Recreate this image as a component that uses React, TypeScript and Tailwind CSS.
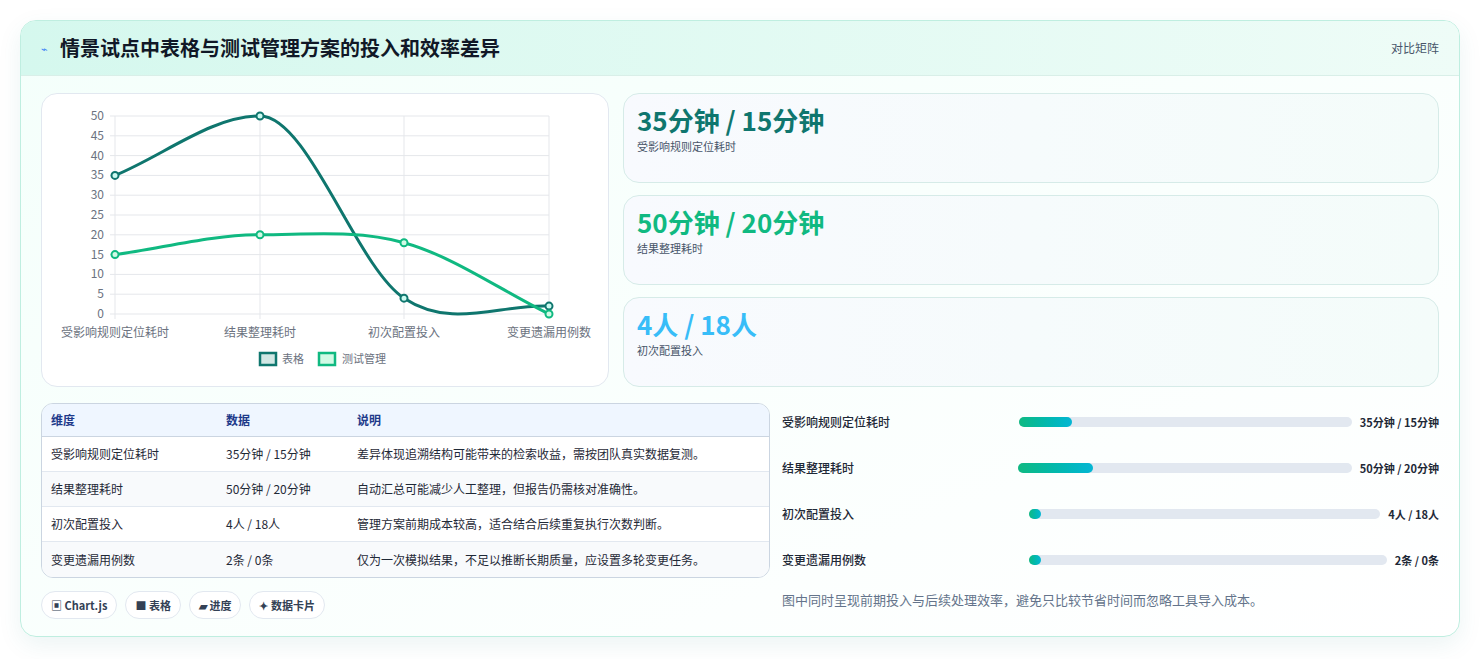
import React from "react";

const F = { fontFamily: '"Noto Sans CJK SC", "Noto Sans", sans-serif' };

function yv(v: number) { return 313 - v * 3.96; }
const xs = [113, 258, 402, 547];
function curve(vals: number[]) {
  const p = vals.map((v, i) => [xs[i], yv(v)]);
  const n = p.length;
  const s: number[] = [];
  for (let i = 0; i < n - 1; i++) s.push((p[i + 1][1] - p[i][1]) / (p[i + 1][0] - p[i][0]));
  const m: number[] = [];
  for (let i = 0; i < n; i++) {
    if (i === 0) m.push(s[0]);
    else if (i === n - 1) m.push(s[n - 2]);
    else if (s[i - 1] * s[i] <= 0) m.push(0);
    else m.push((s[i - 1] + s[i]) / 2);
  }
  let d = `M${p[0][0]},${p[0][1]}`;
  for (let i = 0; i < n - 1; i++) {
    const dx = (p[i + 1][0] - p[i][0]) / 3;
    d += ` C${p[i][0] + dx},${p[i][1] + m[i] * dx} ${p[i + 1][0] - dx},${p[i + 1][1] - m[i + 1] * dx} ${p[i + 1][0]},${p[i + 1][1]}`;
  }
  return d;
}

function Chart() {
  const a = [35, 50, 4, 2], b = [15, 20, 18, 0];
  const labels = ["受影响规则定位耗时", "结果整理耗时", "初次配置投入", "变更遗漏用例数"];
  return (
    <svg width="568" height="294" viewBox="40 93 568 294" style={F}>
      {[0, 5, 10, 15, 20, 25, 30, 35, 40, 45, 50].map(v => (
        <g key={v}>
          <line x1={108} x2={547} y1={yv(v)} y2={yv(v)} stroke="#e5e7eb" />
          <text x={102} y={yv(v) + 4} fontSize="12" fill="#6b7280" textAnchor="end">{v}</text>
        </g>
      ))}
      {xs.map(x => <line key={x} x1={x} x2={x} y1={115} y2={318} stroke="#e5e7eb" />)}
      {labels.map((l, i) => <text key={l} x={xs[i]} y={336} fontSize="12" fill="#6b7280" textAnchor="middle">{l}</text>)}
      <path d={curve(a)} fill="none" stroke="#0f766e" strokeWidth="3" />
      <path d={curve(b)} fill="none" stroke="#10b981" strokeWidth="3" />
      {a.map((v, i) => <circle key={i} cx={xs[i]} cy={yv(v)} r="3.5" fill="#ccfbf1" stroke="#0f766e" strokeWidth="2" />)}
      {b.map((v, i) => <circle key={i} cx={xs[i]} cy={yv(v)} r="3.5" fill="#d1fae5" stroke="#10b981" strokeWidth="2" />)}
      <rect x={258} y={352} width={16} height={12} fill="#d1e7e4" stroke="#0f766e" strokeWidth="2.5" />
      <text x={280} y={362} fontSize="11" fill="#6b7280">表格</text>
      <rect x={317} y={352} width={16} height={12} fill="#d1fae5" stroke="#10b981" strokeWidth="2.5" />
      <text x={340} y={362} fontSize="11" fill="#6b7280">测试管理</text>
    </svg>
  );
}

const stats = [
  { v: "35分钟 / 15分钟", l: "受影响规则定位耗时", c: "text-[#0f766e]" },
  { v: "50分钟 / 20分钟", l: "结果整理耗时", c: "text-[#10b981]" },
  { v: "4人 / 18人", l: "初次配置投入", c: "text-[#38bdf8]" },
];
const rows = [
  ["受影响规则定位耗时", "35分钟 / 15分钟", "差异体现追溯结构可能带来的检索收益，需按团队真实数据复测。"],
  ["结果整理耗时", "50分钟 / 20分钟", "自动汇总可能减少人工整理，但报告仍需核对准确性。"],
  ["初次配置投入", "4人 / 18人", "管理方案前期成本较高，适合结合后续重复执行次数判断。"],
  ["变更遗漏用例数", "2条 / 0条", "仅为一次模拟结果，不足以推断长期质量，应设置多轮变更任务。"],
];
const bars = [
  { l: "受影响规则定位耗时", v: "35分钟 / 15分钟", w: "16%", lw: "w-[237px]" },
  { l: "结果整理耗时", v: "50分钟 / 20分钟", w: "22.5%", lw: "w-[236px]" },
  { l: "初次配置投入", v: "4人 / 18人", w: "12px", lw: "w-[247px]" },
  { l: "变更遗漏用例数", v: "2条 / 0条", w: "12px", lw: "w-[247px]" },
];

export default function App() {
  return (
    <div className="w-[1480px] h-[659px] bg-white p-5 pr-5" style={F}>
      <div className="w-[1440px] h-[617px] rounded-2xl border border-[#bfeee0] shadow-[0_8px_24px_rgba(15,118,110,0.08)] overflow-hidden bg-gradient-to-br from-[#f4fffb] to-white">
        <div className="h-[55px] flex items-center justify-between px-5 bg-gradient-to-r from-[#d5f8ee] to-[#eefcf7] border-b border-[#d9efe8]">
          <div className="flex items-center gap-3">
            <span className="text-[11px] text-[#3b82f6]">⌁</span>
            <span className="text-[20px] font-bold text-[#111827]">情景试点中表格与测试管理方案的投入和效率差异</span>
          </div>
          <span className="text-xs text-[#475569]">对比矩阵</span>
        </div>
        <div className="px-5 pt-[17px]">
          <div className="flex gap-[14px]">
            <div className="w-[568px] h-[294px] rounded-2xl border border-[#e2e8f0] bg-white"><Chart /></div>
            <div className="flex-1 flex flex-col gap-3">
              {stats.map(s => (
                <div key={s.l} className="h-[90px] rounded-2xl border border-[#d6ebe8] bg-gradient-to-r from-[#f8fafe] to-[#f4fcfa] px-[13px] pt-[9px]">
                  <div className={`text-[26px] font-bold leading-[34px] ${s.c}`}>{s.v}</div>
                  <div className="text-[11px] text-[#475569] mt-[1px]">{s.l}</div>
                </div>
              ))}
            </div>
          </div>
          <div className="flex gap-3 mt-4">
            <div className="w-[729px]">
              <div className="rounded-xl border border-[#cbd5e1] overflow-hidden text-[12px]">
                <div className="flex h-[33px] items-center bg-[#eff6ff] text-[#1e3a8a] font-semibold border-b border-[#cbd5e1]">
                  <div className="w-[184px] pl-[9px]">维度</div><div className="w-[131px]">数据</div><div>说明</div>
                </div>
                {rows.map((r, i) => (
                  <div key={r[0]} className={`flex h-[35px] items-center text-[#1f2937] ${i % 2 ? "bg-[#f8fafc]" : "bg-white"} ${i < 3 ? "border-b border-[#e2e8f0]" : ""}`}>
                    <div className="w-[184px] pl-[9px]">{r[0]}</div><div className="w-[131px]">{r[1]}</div><div>{r[2]}</div>
                  </div>
                ))}
              </div>
              <div className="flex gap-2 mt-[13px] text-[11px] text-[#334155] font-semibold">
                {["▣ Chart.js", "■ 表格", "▰ 进度", "✦ 数据卡片"].map(c => (
                  <span key={c} className="h-[28px] px-[9px] flex items-center rounded-full border border-[#e2e8f0] bg-white">{c}</span>
                ))}
              </div>
            </div>
            <div className="flex-1 -mt-[4px]">
              {bars.map(b => (
                <div key={b.l} className="flex items-center h-[46px] text-[12px] text-[#1f2937] font-medium">
                  <div className={`${b.lw} shrink-0`}>{b.l}</div>
                  <div className="flex-1 h-[10px] rounded-full bg-[#e2e8f0] mr-2">
                    <div className="h-full rounded-full bg-gradient-to-r from-[#10b981] to-[#06b6d4]" style={{ width: b.w }} />
                  </div>
                  <div className="font-bold text-[11px] text-[#1f2937]">{b.v}</div>
                </div>
              ))}
              <div className="text-[13px] text-[#64748b] mt-[7px]">图中同时呈现前期投入与后续处理效率，避免只比较节省时间而忽略工具导入成本。</div>
            </div>
          </div>
        </div>
      </div>
    </div>
  );
}
